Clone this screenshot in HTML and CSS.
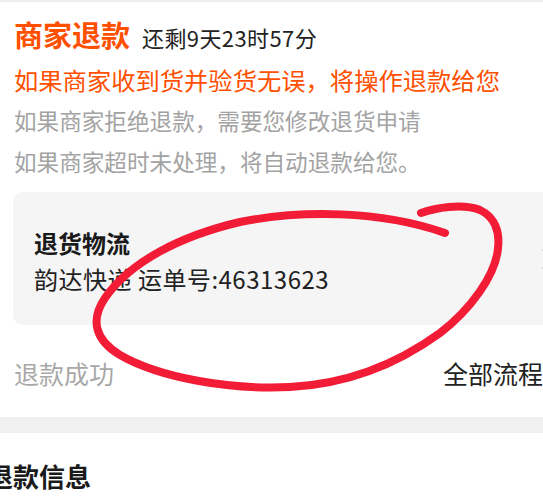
FILE: index.html
```html
<!DOCTYPE html>
<html lang="zh-CN">
<head>
<meta charset="utf-8">
<link rel="stylesheet" href="styles.css">
</head>
<body>
<div class="page">
  <div class="topline"></div>
  <section class="refund">
    <div class="head">
      <span class="head-title">商家退款</span>
      <span class="head-time">还剩9天23时57分</span>
    </div>
    <p class="line line-orange">如果商家收到货并验货无误，将操作退款给您</p>
    <p class="line line-gray">如果商家拒绝退款，需要您修改退货申请</p>
    <p class="line line-gray">如果商家超时未处理，将自动退款给您。</p>
    <div class="card">
      <div class="card-body">
        <div class="card-title">退货物流</div>
        <div class="card-text">韵达快递 运单号:46313623</div>
      </div>
      <svg class="chev" width="10" height="20" viewBox="0 0 10 20"><path d="M1 1 L9 10 L1 19" fill="none" stroke="#c4c4c4" stroke-width="1.6" stroke-linecap="round" stroke-linejoin="round"/></svg>
    </div>
    <div class="status">
      <span class="status-done">退款成功</span>
      <span class="status-all">全部流程</span>
    </div>
  </section>
  <div class="band"></div>
  <section class="info">
    <h2 class="info-title">退款信息</h2>
  </section>
  <svg class="mark" width="543" height="500" viewBox="0 0 543 500">
    <path d="M421 213 C435 208, 462 203, 480 210 C495 217, 500 232, 498 248 C496 275, 470 310, 440 333 C400 362, 350 384, 290 387 C230 390, 160 378, 120 355 C95 340, 90 320, 105 298 C130 262, 180 236, 240 222 C300 210, 380 210, 445 233" fill="none" stroke="#f21c36" stroke-width="8" stroke-linecap="round" stroke-linejoin="round"/>
  </svg>
</div>
</body>
</html>
```
FILE: styles.css
```css
* { box-sizing: border-box; }
html, body {
  margin: 0;
  padding: 0;
  background: #ffffff;
}
body {
  width: 543px;
  height: 500px;
  overflow: hidden;
  font-family: "Noto Sans CJK SC", "Noto Sans", sans-serif;
  color: #222222;
}
.page {
  position: relative;
  width: 580px;
  height: 500px;
}
.topline {
  height: 2px;
  background: #eeeeee;
}
.refund {
  padding: 10px 0 0 14px;
}
.head {
  display: flex;
  align-items: baseline;
  height: 44px;
  line-height: 44px;
}
.head-title {
  font-size: 29px;
  font-weight: 700;
  color: #ff5000;
}
.head-time {
  margin-left: 12px;
  font-size: 22px;
  letter-spacing: 0.4px;
  color: #222222;
}
.line {
  margin: 0;
  line-height: 41px;
  white-space: nowrap;
}
.line-orange {
  margin-top: 3px;
  font-size: 24.3px;
  color: #ff5000;
}
.line-gray {
  font-size: 22.6px;
  color: #a3a3a3;
}
.card {
  display: flex;
  align-items: center;
  margin: 10px 14px 0 -1px;
  height: 133px;
  padding: 0 14px 0 21px;
  background: #f5f5f5;
  border-radius: 10px;
}
.card-body {
  flex: 1;
  padding-top: 4px;
}
.card-title {
  font-size: 24px;
  font-weight: 700;
  line-height: 36px;
  color: #1a1a1a;
}
.card-text {
  font-size: 24px;
  line-height: 36px;
  letter-spacing: 0.5px;
  color: #222222;
}
.chev {
  display: block;
  margin-left: 8px;
}
.status {
  display: flex;
  justify-content: space-between;
  padding: 30px 0 26px 0;
  line-height: 36px;
  font-size: 25px;
}
.status-done {
  color: #a8a8a8;
}
.status-all {
  width: 137px;
  color: #222222;
  white-space: nowrap;
}
.band {
  height: 16px;
  background: #f0f0f0;
}
.info {
  padding: 23px 0 0 0;
}
.info-title {
  margin: 0 0 0 -13px;
  font-size: 26px;
  font-weight: 700;
  line-height: 40px;
  color: #1a1a1a;
}
.mark {
  position: absolute;
  left: 0;
  top: 0;
  pointer-events: none;
}
```
